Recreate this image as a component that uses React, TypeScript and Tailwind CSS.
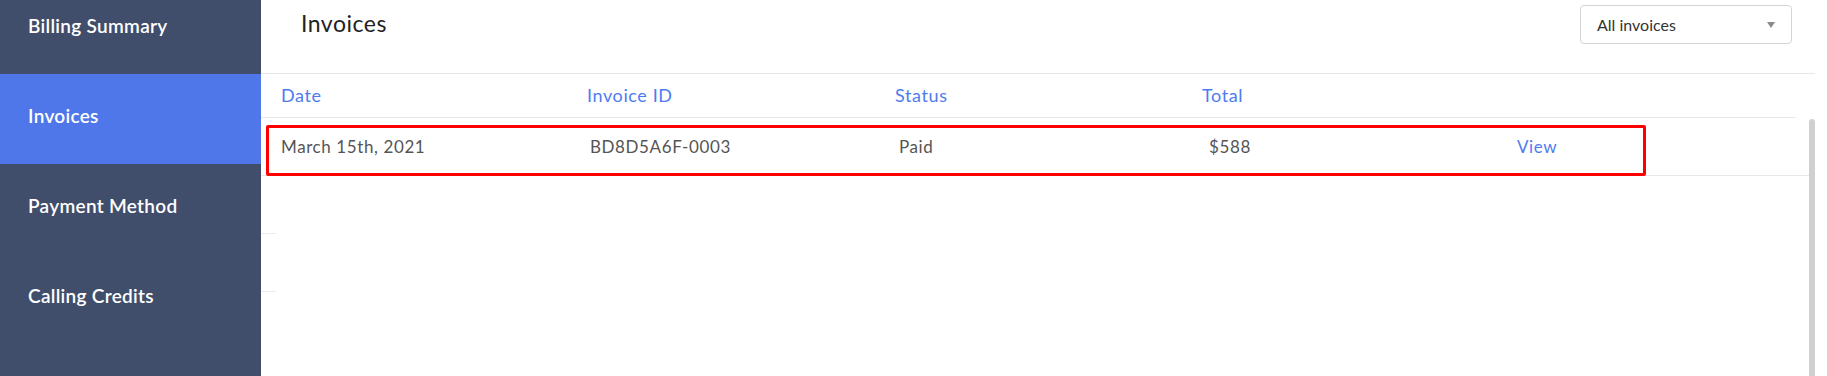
import { useState } from 'react';

const navItems = ['Billing Summary', 'Invoices', 'Payment Method', 'Calling Credits'];

export default function App() {
  const [active] = useState('Invoices');

  return (
    <div className="h-[376px] flex overflow-hidden bg-white font-['Lato',sans-serif]">
      {/* Sidebar */}
      <aside className="w-[261px] shrink-0 bg-[#414e6b]">
        <nav className="-mt-[16px] flex flex-col">
          {navItems.map((item) => (
            <div
              key={item}
              className={`h-[90px] flex items-center pl-[28px] pb-[6px] text-[19px] tracking-[0.3px] font-semibold text-white ${
                item === active ? 'bg-[#4f77ea]' : ''
              }`}
            >
              {item}
            </div>
          ))}
        </nav>
      </aside>

      {/* Main */}
      <main className="flex-1 mr-[12px] flex flex-col min-w-0">
        <header className="h-[74px] shrink-0 flex justify-between border-b border-[#e8e8e8]">
          <h1 className="pl-[40px] pt-[6px] text-[23px] tracking-[0.5px] text-[#222]">Invoices</h1>
          <button className="mt-[5px] mr-[23px] w-[212px] h-[39px] flex items-center justify-between pl-[16px] pr-[16px] border border-[#d4d4d4] rounded-[4px] text-[16px] text-[#333]">
            <span>All invoices</span>
            <span className="w-0 h-0 border-l-[4.5px] border-r-[4.5px] border-t-[6px] border-l-transparent border-r-transparent border-t-[#8a8a8a]" />
          </button>
        </header>

        {/* Table head */}
        <div className="h-[44px] shrink-0 mr-[19px] grid grid-cols-[306px_308px_307px_1fr] items-center pl-[20px] border-b border-[#e8e8e8] text-[18px] tracking-[0.6px] text-[#4d7cf0]">
          <div>Date</div>
          <div>Invoice ID</div>
          <div>Status</div>
          <div>Total</div>
        </div>

        {/* Table body */}
        <div className="flex-1 flex min-h-0">
          <div className="flex-1 relative">
            <div className="h-[58px] grid grid-cols-[309px_309px_310px_308px_1fr] items-center pl-[20px] border-b border-[#e8e8e8] text-[17px] tracking-[0.6px] text-[#555]">
              <div>March 15th, 2021</div>
              <div>BD8D5A6F-0003</div>
              <div>Paid</div>
              <div>$588</div>
              <a className="text-[#4d7cf0]">View</a>
            </div>
            <div className="w-[15px] h-[58px] border-b border-[#ececec]" />
            <div className="w-[15px] h-[58px] border-b border-[#ececec]" />

            {/* highlight annotation */}
            <div className="absolute left-[5px] top-[7px] w-[1380px] h-[51px] border-[3px] border-[#ff0000] rounded-[2px] pointer-events-none" />
          </div>
          <div className="w-[6px] mt-[1px] bg-[#d0d0d0] rounded-t-[3px]" />
        </div>
      </main>
    </div>
  );
}
